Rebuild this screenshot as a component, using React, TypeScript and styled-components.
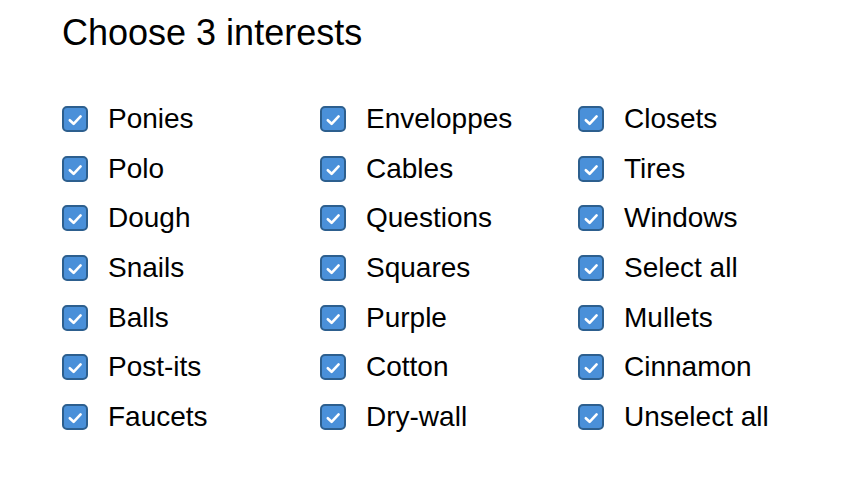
import React from "react";
import styled, { createGlobalStyle } from "styled-components";

const Global = createGlobalStyle`
  html, body { margin: 0; padding: 0; background: #ffffff; }
  body { font-family: "Liberation Sans", Arial, Helvetica, sans-serif; color: #000; }
`;

const Page = styled.div`
  padding: 12px 0 0 62px;
`;

const Title = styled.h1`
  margin: 0;
  font-size: 36px;
  font-weight: 400;
  line-height: 42px;
`;

const Grid = styled.div`
  margin-top: 52px;
  display: grid;
  grid-template-columns: repeat(3, 258px);
  grid-auto-rows: 49.7px;
`;

const Item = styled.label`
  display: flex;
  align-items: center;
  gap: 20px;
  height: 26px;
  font-size: 28px;
  line-height: 26px;
`;

const Box = styled.span`
  box-sizing: border-box;
  width: 26px;
  height: 26px;
  border-radius: 5px;
  border: 2px solid #2d5f8e;
  background: #4a90d9;
  display: flex;
  align-items: center;
  justify-content: center;
  flex: none;
`;

const Check = () => (
  <svg width="22" height="22" viewBox="0 0 22 22">
    <path d="M5.8 12.2 L9.6 15.8 L16.6 8.4" fill="none" stroke="#fff" strokeWidth="2.6" strokeLinecap="round" strokeLinejoin="round" />
  </svg>
);

const columns = [
  ["Ponies", "Polo", "Dough", "Snails", "Balls", "Post-its", "Faucets"],
  ["Enveloppes", "Cables", "Questions", "Squares", "Purple", "Cotton", "Dry-wall"],
  ["Closets", "Tires", "Windows", "Select all", "Mullets", "Cinnamon", "Unselect all"],
];

const items: string[] = [];
for (let r = 0; r < 7; r++) for (let c = 0; c < 3; c++) items.push(columns[c][r]);

export default function App() {
  return (
    <Page>
      <Global />
      <Title>Choose 3 interests</Title>
      <Grid>
        {items.map((t) => (
          <Item key={t}>
            <Box>
              <Check />
            </Box>
            {t}
          </Item>
        ))}
      </Grid>
    </Page>
  );
}
